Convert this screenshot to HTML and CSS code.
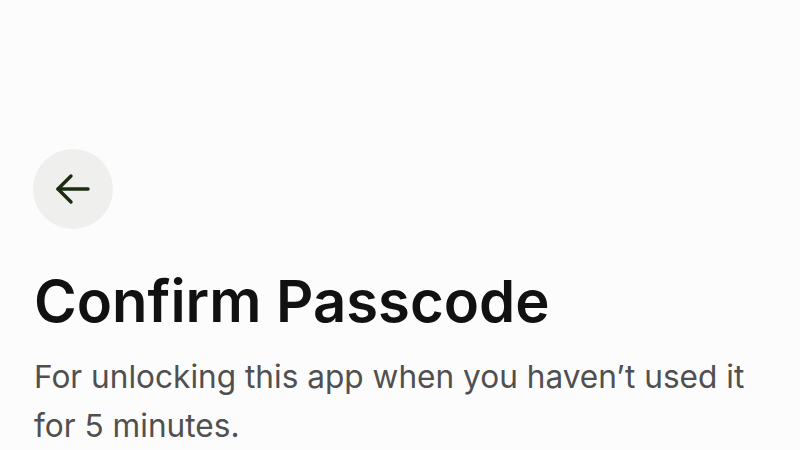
FILE: index.html
```html
<!DOCTYPE html>
<html lang="en">
<head>
<meta charset="utf-8">
<title>Confirm Passcode</title>
<link rel="stylesheet" href="styles.css">
</head>
<body>
<main class="screen">
  <button class="back" aria-label="Back">
    <svg width="48" height="48" viewBox="0 0 24 24" fill="none" stroke="#1c2c10" stroke-width="1.7" stroke-linecap="round" stroke-linejoin="round">
      <path d="M19.5 12H4.5"/>
      <path d="M11 5.5L4.5 12l6.5 6.5"/>
    </svg>
  </button>
  <h1 class="title">Confirm Passcode</h1>
  <p class="desc">For unlocking this app when you haven’t used it for 5 minutes.</p>
</main>
</body>
</html>
```
FILE: styles.css
```css
html, body {
  margin: 0;
  padding: 0;
  background: #fdfcfd;
}
.screen {
  padding: 149px 34px 0 34px;
  font-family: Inter, "Noto Sans", sans-serif;
  display: flex;
  flex-direction: column;
  align-items: flex-start;
}
.back {
  width: 80px;
  height: 80px;
  border-radius: 50%;
  border: none;
  background: #efefed;
  display: flex;
  align-items: center;
  justify-content: center;
  padding: 0;
  margin-left: -1px;
}
.title {
  margin: 37px 0 0 0;
  font-size: 58px;
  line-height: 70px;
  font-weight: 600;
  color: #111;
}
.desc {
  margin: 16px 0 0 0;
  font-size: 31.6px;
  line-height: 49px;
  color: #505050;
  max-width: 740px;
}
```
